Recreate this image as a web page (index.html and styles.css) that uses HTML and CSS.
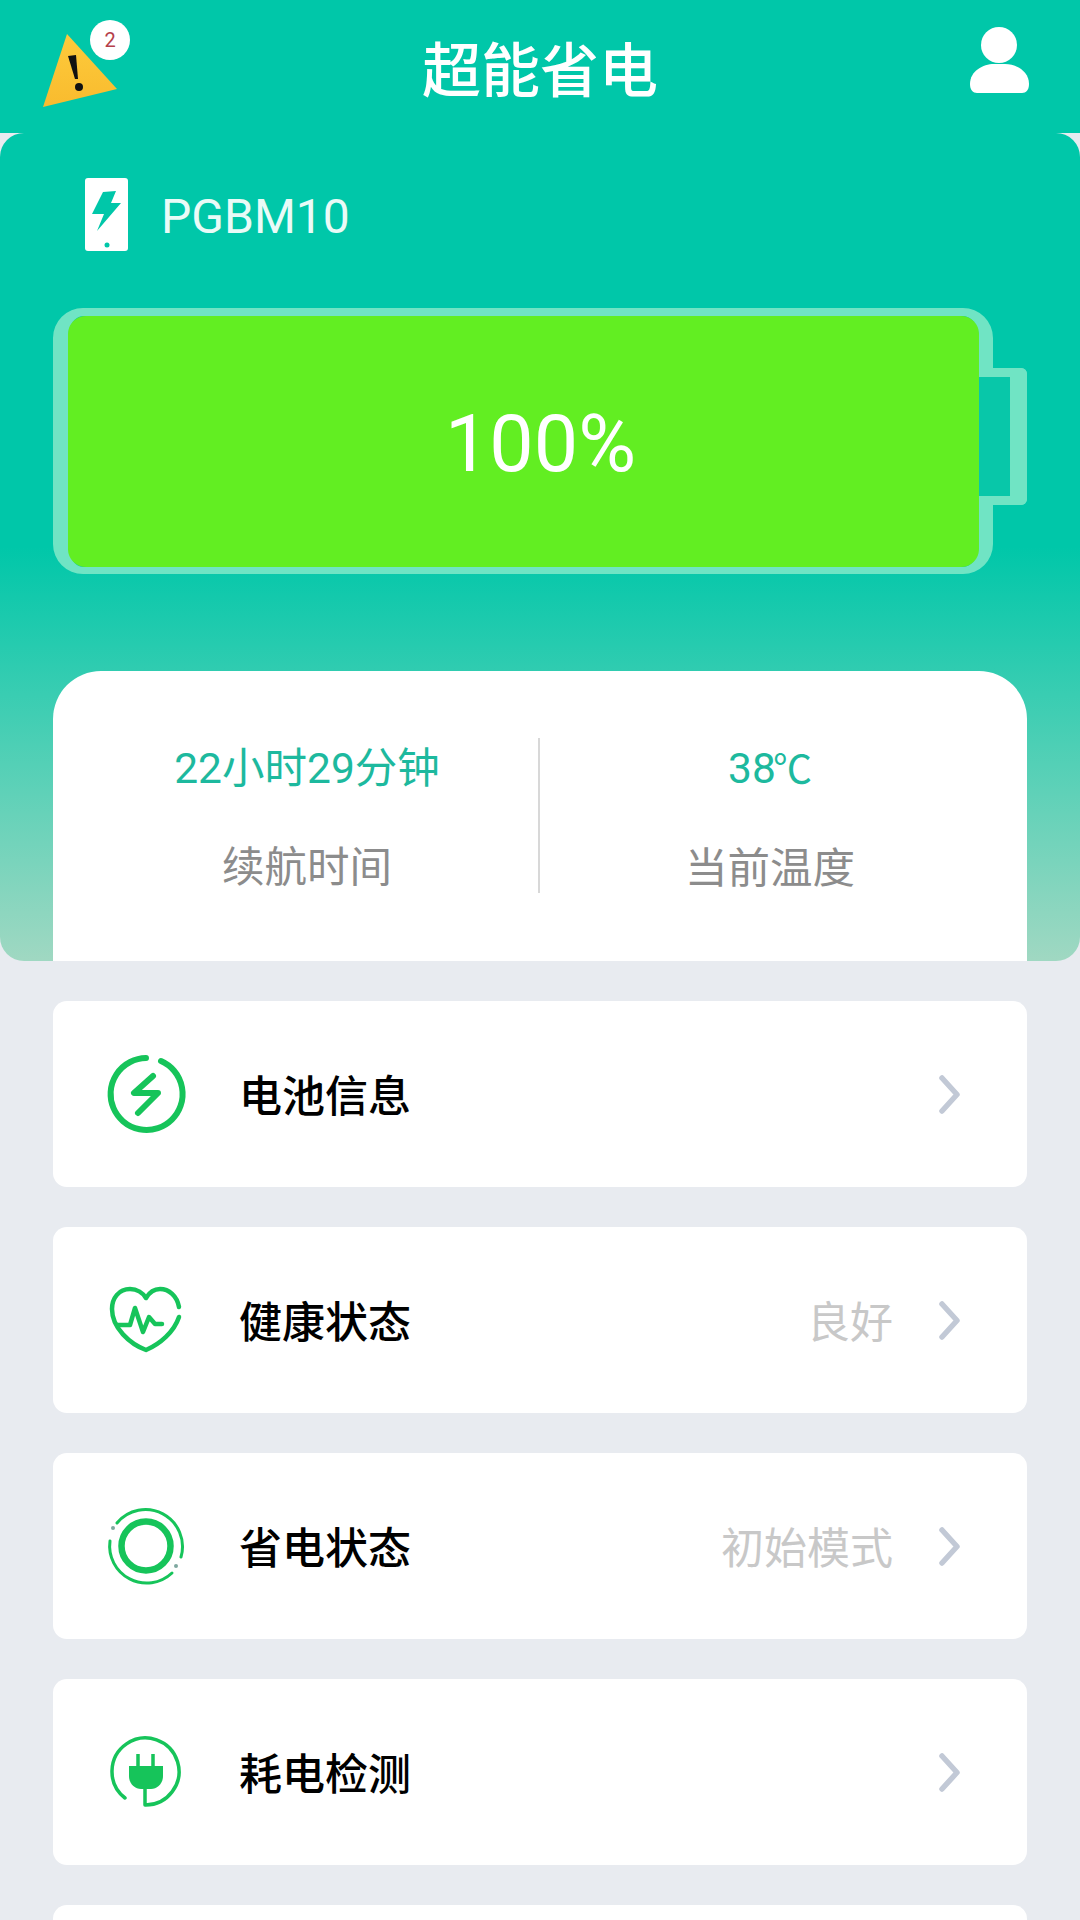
FILE: index.html
```html
<!DOCTYPE html>
<html lang="zh-CN">
<head>
  <meta charset="UTF-8">
  <title>超能省电</title>
  <link rel="stylesheet" href="styles.css">
</head>
<body>
  <header class="topbar">
    <div class="warn">
      <svg width="87" height="87" viewBox="0 0 87 87">
        <defs>
          <linearGradient id="warnFill" x1="0" y1="0" x2="0" y2="1">
            <stop offset="0" stop-color="#fdcb3c"/>
            <stop offset="1" stop-color="#f9bb2e"/>
          </linearGradient>
        </defs>
        <polygon points="24,14 74,69 0,87" fill="url(#warnFill)"/>
        <polygon points="25,36 33,35 35,59 32,59" fill="#111"/>
        <circle cx="36" cy="67" r="4" fill="#111"/>
      </svg>
      <span class="badge">2</span>
    </div>
    <h1 class="title">超能省电</h1>
    <svg class="user" width="59" height="66" viewBox="0 0 59 66">
      <circle cx="29" cy="18" r="18" fill="#fff"/>
      <path d="M0 57C0 44 13 37 24 37H35C46 37 59 44 59 57C59 63 56 66 52 66H7C3 66 0 63 0 57Z" fill="#fff"/>
    </svg>
  </header>

  <section class="hero">
    <div class="device">
      <svg width="43" height="73" viewBox="0 0 43 73">
        <rect width="43" height="73" rx="3" fill="#fff"/>
        <polygon points="18,14 31,13 26,25 36,25 12,53 19,36 7,36" fill="#00c7a9"/>
        <circle cx="22" cy="67" r="2.5" fill="#00c7a9"/>
      </svg>
      <span class="device-name">PGBM10</span>
    </div>

    <div class="battery">
      <div class="battery-shell">
        <div class="battery-fill">100%</div>
      </div>
      <div class="battery-cap"></div>
    </div>

    <div class="stats">
      <div class="stat">
        <div class="stat-value">22小时29分钟</div>
        <div class="stat-label">续航时间</div>
      </div>
      <div class="stat stat-right">
        <div class="stat-value">38<span class="unit">℃</span></div>
        <div class="stat-label">当前温度</div>
      </div>
    </div>
  </section>

  <main class="list">
    <div class="row">
      <svg class="row-icon" viewBox="0 0 84 84" fill="none" stroke="#16c45a" stroke-linecap="round" stroke-linejoin="round">
        <path d="M42 6A36 36 0 1 0 57 9" stroke-width="6"/>
        <polyline points="49,24 30,41 54,41 34,61" stroke-width="6"/>
      </svg>
      <span class="row-name">电池信息</span>
      <svg class="chevron" width="21" height="39" viewBox="0 0 21 39" fill="none"><polyline points="3,3 18,19.5 3,36"/></svg>
    </div>

    <div class="row">
      <svg class="row-icon" viewBox="0 0 84 84" fill="none" stroke="#16c45a" stroke-width="4.5" stroke-linecap="round" stroke-linejoin="round">
        <path d="M75 29C73 18 65 11 56 11C50 11 45 15 42 20C39 15 33 11 26 11C15 11 8 20 8 31C8 50 26 66 42 72C56 66 70 54 75 39"/>
        <polyline points="13,47 26,47 31,30 39,54 45,39 51,46 58,46"/>
      </svg>
      <span class="row-name">健康状态</span>
      <span class="row-value">良好</span>
      <svg class="chevron" width="21" height="39" viewBox="0 0 21 39" fill="none"><polyline points="3,3 18,19.5 3,36"/></svg>
    </div>

    <div class="row">
      <svg class="row-icon" viewBox="0 0 84 84" fill="none" stroke="#16c45a" stroke-linecap="round">
        <circle cx="42" cy="42" r="24.5" stroke-width="6.5"/>
        <path d="M13 19A37 37 0 0 1 77 53" stroke-width="3"/>
        <path d="M68 69A37 37 0 0 1 6 37" stroke-width="3"/>
        <circle cx="9" cy="24" r="2" fill="#7fa8a0" stroke="none"/>
        <circle cx="72" cy="62" r="2" fill="#7fa8a0" stroke="none"/>
      </svg>
      <span class="row-name">省电状态</span>
      <span class="row-value">初始模式</span>
      <svg class="chevron" width="21" height="39" viewBox="0 0 21 39" fill="none"><polyline points="3,3 18,19.5 3,36"/></svg>
    </div>

    <div class="row">
      <svg class="row-icon" viewBox="0 0 84 84" fill="none" stroke="#16c45a" stroke-width="3.5">
        <path d="M21 68A33.500 33.500 0 1 1 41 75V58" stroke-linecap="round" stroke-linejoin="round"/>
        <path d="M34 24V37M49 24V37"/>
        <path d="M25 36H59V46C59 54 53 59 47 59H37C31 59 25 54 25 46Z" fill="#16c45a" stroke="none"/>
      </svg>
      <span class="row-name">耗电检测</span>
      <svg class="chevron" width="21" height="39" viewBox="0 0 21 39" fill="none"><polyline points="3,3 18,19.5 3,36"/></svg>
    </div>

    <div class="row"></div>
  </main>
</body>
</html>
```

FILE: styles.css
```css
html, body {
  height: 1920px;
  overflow: hidden;
}
body {
  margin: 0;
  background: #e8ebf0;
  font-family: Roboto, "Noto Sans CJK SC", sans-serif;
  color: #000;
}
.topbar {
  display: grid;
  grid-template-columns: 1fr auto 1fr;
  align-items: start;
  height: 133px;
  box-sizing: border-box;
  padding: 20px 51px 0;
  background: #00c7a9;
}
.warn {
  position: relative;
  width: 87px;
  height: 87px;
  margin-left: -8px;
}
.warn svg {
  display: block;
}
.badge {
  position: absolute;
  left: 47px;
  top: 0;
  width: 40px;
  height: 40px;
  border-radius: 50%;
  background: #fff;
  color: #b5404a;
  font-size: 20px;
  line-height: 40px;
  text-align: center;
}
.title {
  margin: 23px 0 0;
  font-size: 59px;
  line-height: 58px;
  font-weight: 500;
  color: #fff;
}
.user {
  justify-self: end;
  margin-top: 7px;
}
.hero {
  height: 828px;
  box-sizing: border-box;
  padding: 45px 53px 0;
  border-radius: 24px;
  background: linear-gradient(#00c7a9 0, #00c7a9 50%, #a0d8c2 100%);
}
.device {
  display: flex;
  align-items: center;
  gap: 33px;
  margin-left: 32px;
}
.device-name {
  margin-top: 4px;
  font-size: 48px;
  color: #e9fbf7;
}
.battery {
  position: relative;
  margin-top: 57px;
}
.battery-shell {
  width: 940px;
  height: 266px;
  box-sizing: border-box;
  border-style: solid;
  border-color: #70e4c4;
  border-width: 8px 14px 7px 15px;
  border-radius: 30px;
}
.battery-fill {
  display: flex;
  align-items: center;
  justify-content: center;
  height: 100%;
  padding: 5px 0 0 34px;
  box-sizing: border-box;
  border-radius: 18px;
  background: #62ee22;
  color: #fff;
  font-size: 79px;
  font-weight: 400;
}
.battery-cap {
  position: absolute;
  left: 926px;
  top: 60px;
  width: 48px;
  height: 137px;
  box-sizing: border-box;
  border-style: solid;
  border-color: #70e4c4;
  border-width: 9px 17px 9px 0;
  border-radius: 0 6px 6px 0;
  background: #08c7a9;
}
.stats {
  display: grid;
  grid-template-columns: 1fr 1fr;
  height: 290px;
  box-sizing: border-box;
  margin-top: 97px;
  padding: 67px 27px 0 23px;
  border-radius: 48px 48px 0 0;
  background: #fff;
}
.stat {
  height: 155px;
  text-align: center;
}
.stat-right {
  border-left: 2px solid #d8d8d8;
}
.stat-value {
  font-size: 42.5px;
  line-height: 62px;
  color: #1db99e;
}
.unit {
  margin-left: -3px;
  font-size: 39px;
}
.stat-label {
  margin-top: 42px;
  font-size: 42.5px;
  line-height: 52px;
  color: #8c8c8c;
}
.list {
  display: flex;
  flex-direction: column;
  gap: 40px;
  height: 959px;
  box-sizing: border-box;
  padding: 40px 53px 0;
  overflow: hidden;
}
.row {
  display: flex;
  align-items: center;
  flex: none;
  height: 186px;
  box-sizing: border-box;
  padding: 0 67px 0 51px;
  border-radius: 14px;
  background: #fff;
}
.row-icon {
  width: 84px;
  height: 84px;
  margin-right: 51px;
}
.row-name {
  flex: 1;
  padding-bottom: 2px;
  font-size: 43px;
  font-weight: 500;
}
.row-value {
  margin-right: 46px;
  padding-bottom: 2px;
  font-size: 43px;
  color: #c8c8c8;
}
.chevron polyline {
  stroke: #c2c9d6;
  stroke-width: 5.5;
  stroke-linecap: round;
  stroke-linejoin: round;
}
```
